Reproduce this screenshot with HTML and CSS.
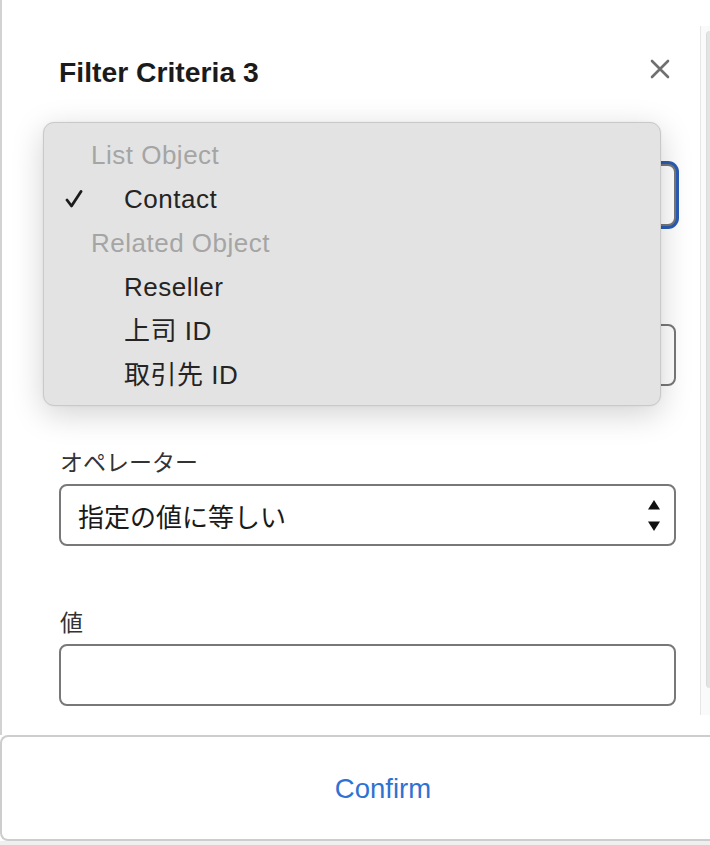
FILE: index.html
```html
<!DOCTYPE html>
<html lang="ja">
<head>
<meta charset="utf-8">
<title>Filter Criteria 3</title>
<link rel="stylesheet" href="styles.css">
</head>
<body>
<div class="app">
  <div class="content">
    <div class="form-area">
      <div class="header">
        <h1 class="title">Filter Criteria 3</h1>
        <svg class="close" width="20" height="20" viewBox="0 0 20 20" aria-label="close">
          <path d="M2 2 L18 18 M18 2 L2 18" stroke="#707070" stroke-width="2.6" stroke-linecap="round" fill="none"/>
        </svg>
      </div>
      <div class="field">
        <div class="label"></div>
        <div class="box focused"></div>
      </div>
      <div class="field">
        <div class="label"></div>
        <div class="box"></div>
      </div>
      <div class="field">
        <div class="label">オペレーター</div>
        <div class="box select">
          <span class="value">指定の値に等しい</span>
          <svg class="arrows" width="12" height="31" viewBox="0 0 12 31">
            <path d="M6 0 L12 9.5 L0 9.5 Z" fill="#111"/>
            <path d="M0 21.5 L12 21.5 L6 31 Z" fill="#111"/>
          </svg>
        </div>
      </div>
      <div class="field">
        <div class="label">値</div>
        <div class="box"></div>
      </div>
    </div>
    <div class="scrollbar"><div class="thumb"></div></div>
  </div>
  <div class="footer"><span class="confirm">Confirm</span></div>
  <div class="bottom-strip"></div>

  <div class="menu">
    <div class="menu-header">List Object</div>
    <div class="menu-item">
      <span class="check-slot">
        <svg width="18" height="18" viewBox="0 0 18 18">
          <path d="M2 10 L6.5 16 L16 1.5" stroke="#1c1c1c" stroke-width="2.8" stroke-linecap="round" stroke-linejoin="round" fill="none"/>
        </svg>
      </span>
      <span>Contact</span>
    </div>
    <div class="menu-header">Related Object</div>
    <div class="menu-item"><span class="check-slot"></span><span>Reseller</span></div>
    <div class="menu-item"><span class="check-slot"></span><span>上司 ID</span></div>
    <div class="menu-item"><span class="check-slot"></span><span>取引先 ID</span></div>
  </div>
</div>
</body>
</html>
```
FILE: styles.css
```css
html, body {
  margin: 0;
  padding: 0;
  background: #ffffff;
}
body {
  width: 710px;
  height: 845px;
  overflow: hidden;
  font-family: "Liberation Sans", "Noto Sans CJK JP", sans-serif;
}
.app {
  position: relative;
  width: 710px;
  height: 845px;
  display: flex;
  flex-direction: column;
  overflow: hidden;
}
.content {
  flex: 1;
  display: flex;
  min-height: 0;
}
.form-area {
  width: 700px;
  box-sizing: border-box;
  border-left: 2px solid #d2d2d2;
  padding: 55px 0 0 57px;
}
.header {
  width: 617px;
  height: 34px;
  display: flex;
  align-items: flex-start;
  justify-content: space-between;
  margin-bottom: 1px;
}
.title {
  margin: 0;
  font-size: 28.3px;
  line-height: 34px;
  font-weight: bold;
  color: #1b1b1b;
}
.close {
  margin-right: 6px;
  margin-top: 4px;
}
.field {
  display: flex;
  flex-direction: column;
  gap: 6px;
  width: 617px;
}
.header + .field {
  margin-top: 37px;
}
.field + .field {
  margin-top: 60px;
}
.label {
  height: 32px;
  line-height: 30px;
  font-size: 23px;
  color: #333333;
  padding-left: 1px;
  font-family: "Noto Sans CJK JP", sans-serif;
}
.box {
  height: 62px;
  box-sizing: border-box;
  border: 2px solid #787878;
  border-radius: 8px;
  background: #ffffff;
}
.box.focused {
  box-shadow: 0 0 0 3px #2a5cb3;
}
.select {
  display: flex;
  align-items: center;
  justify-content: space-between;
  padding: 0 14px 0 17px;
}
.value {
  font-family: "Noto Sans CJK JP", sans-serif;
  font-size: 26px;
  color: #1a1a1a;
}
.scrollbar {
  width: 10px;
  box-sizing: border-box;
  margin: 26px 0 20px 0;
  border-left: 1px solid #e6e6e6;
  background: #fafafa;
  padding: 5px 0 27px 5px;
}
.thumb {
  height: 100%;
  background: #e4e4e4;
  border-radius: 4px 0 0 4px;
  border-left: 1px solid #dadada;
}
.footer {
  height: 106px;
  width: 710px;
  box-sizing: border-box;
  border: 2px solid #cdcdcd;
  border-right: none;
  border-radius: 8px 0 0 8px;
  padding-left: 54px;
  display: flex;
  align-items: center;
  justify-content: center;
  flex-shrink: 0;
}
.confirm {
  font-size: 27.5px;
  color: #2f72d2;
  margin-top: 2px;
}
.bottom-strip {
  height: 4px;
  background: #efefef;
  flex-shrink: 0;
}
.menu {
  position: absolute;
  left: 43px;
  top: 122px;
  width: 618px;
  height: 284px;
  box-sizing: border-box;
  background: #e3e3e3;
  border: 1px solid #c9c9c9;
  border-radius: 11px;
  padding-top: 10px;
  box-shadow: 0 8px 32px rgba(0, 0, 0, 0.18), 0 0 2px rgba(0, 0, 0, 0.08);
  font-size: 26px;
  letter-spacing: 0.5px;
}
.menu-header {
  height: 44px;
  line-height: 44px;
  padding-left: 47px;
  color: #a5a5a5;
}
.menu-item {
  height: 44px;
  line-height: 44px;
  padding-left: 21px;
  display: flex;
  align-items: center;
  color: #242424;
}
.check-slot {
  width: 59px;
  height: 44px;
  display: flex;
  align-items: center;
}
```
